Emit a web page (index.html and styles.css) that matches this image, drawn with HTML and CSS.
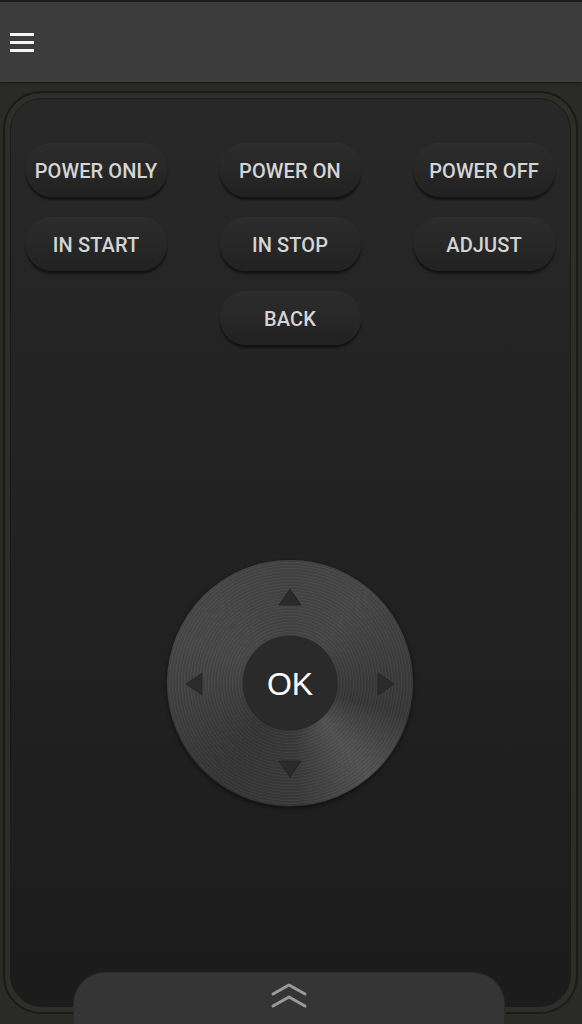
FILE: index.html
```html
<!DOCTYPE html>
<html lang="en">
<head>
    <meta charset="UTF-8">
    <meta name="viewport" content="width=device-width, initial-scale=1.0">
    <title>Remote</title>
    <link rel="stylesheet" href="styles.css">
</head>
<body>
    <div class="app-bar">
        <button class="menu-btn" aria-label="Menu">
            <span></span><span></span><span></span>
        </button>
    </div>

    <div class="main">
        <div class="frame">
            <div class="panel">
                <div class="key-grid">
                    <button class="key">POWER ONLY</button>
                    <button class="key">POWER ON</button>
                    <button class="key">POWER OFF</button>
                    <button class="key">IN START</button>
                    <button class="key">IN STOP</button>
                    <button class="key">ADJUST</button>
                    <button class="key key-back">BACK</button>
                </div>

                <div class="dpad">
                    <svg class="arrow arrow-up" width="24" height="18" viewBox="0 0 24 18"><polygon points="12,1 23,17 1,17"/></svg>
                    <svg class="arrow arrow-down" width="24" height="18" viewBox="0 0 24 18"><polygon points="1,1 23,1 12,17"/></svg>
                    <svg class="arrow arrow-left" width="18" height="24" viewBox="0 0 18 24"><polygon points="1,12 17,1 17,23"/></svg>
                    <svg class="arrow arrow-right" width="18" height="24" viewBox="0 0 18 24"><polygon points="17,12 1,1 1,23"/></svg>
                    <button class="ok-btn">OK</button>
                </div>
            </div>
        </div>

        <div class="drawer">
            <svg width="38" height="26" viewBox="0 0 38 26">
                <polyline points="3,11 19,2 35,11" />
                <polyline points="3,23 19,14 35,23" />
            </svg>
        </div>
    </div>
</body>
</html>
```

FILE: styles.css
```css
/* Reset */
html, body, button {
    margin: 0;
    padding: 0;
    font-family: Roboto, "Liberation Sans", Arial, sans-serif;
}

body {
    width: 582px;
    height: 1024px;
    overflow: hidden;
    background-color: #2a2a26;
}

/* Top bar */
.app-bar {
    height: 80px;
    border-top: 2px solid #1c1c1c;
    background-color: #3c3c3c;
    display: flex;
    align-items: center;
    padding-left: 10px;
    box-shadow: 0 1px 2px rgba(0, 0, 0, 0.5);
    position: relative;
    z-index: 1;
}

.menu-btn {
    background: none;
    border: none;
    width: 24px;
    display: flex;
    flex-direction: column;
    gap: 5px;
    margin-top: 1px;
}

.menu-btn span {
    display: block;
    width: 24px;
    height: 3px;
    background-color: #f4f4f4;
}

/* Main remote area */
.main {
    position: relative;
    height: 942px;
    padding: 9px 4px 0 3px;
}

.frame {
    height: 909px;
    border: 2px solid #1a1a17;
    border-radius: 38px;
    background-color: #2d2d29;
    padding: 5px;
}

.panel {
    height: 100%;
    box-sizing: border-box;
    border: 1px solid #1b1b19;
    border-radius: 32px;
    background: linear-gradient(#282828, #232323 40%, #1c1c1c);
    padding: 45px 15px 0 14px;
    display: flex;
    flex-direction: column;
    align-items: center;
}

/* Function keys */
.key-grid {
    display: grid;
    grid-template-columns: repeat(3, 141px);
    column-gap: 53px;
    row-gap: 21px;
}

.key {
    height: 53px;
    border: none;
    border-radius: 27px;
    background: linear-gradient(#2c2c2c, #262626 60%, #222222);
    color: #d4d4d4;
    font-size: 20px;
    font-weight: 500;
    letter-spacing: 0.1px;
    white-space: nowrap;
    box-shadow: 0 3px 2px #131313, 0 -1px 1px rgba(255, 255, 255, 0.05);
    cursor: pointer;
}

.key-back {
    grid-column: 2;
}

/* Direction pad */
.dpad {
    position: relative;
    width: 246px;
    height: 246px;
    margin-top: 215px;
    border-radius: 50%;
    background:
        repeating-radial-gradient(circle, rgba(255, 255, 255, 0.03) 0 1px, rgba(0, 0, 0, 0.05) 1px 2px, rgba(0, 0, 0, 0) 2px 3px),
        conic-gradient(#434343, #474747 40deg, #3b3b3b 85deg, #383838 105deg, #4c4c4c 130deg, #525252 140deg, #3a3a3a 175deg, #353535 215deg, #3d3d3d 250deg, #474747 290deg, #474747 320deg, #434343);
    box-shadow: 0 0 0 1px #1e1e1e, 0 2px 4px rgba(0, 0, 0, 0.6);
    display: flex;
    align-items: center;
    justify-content: center;
}

.ok-btn {
    width: 94px;
    height: 94px;
    border: none;
    border-radius: 50%;
    background-color: #2a2a2a;
    color: #ffffff;
    font-family: "Liberation Sans", Arial, sans-serif;
    font-size: 32px;
    padding-top: 3px;
    box-sizing: border-box;
    box-shadow: 0 0 2px rgba(0, 0, 0, 0.6);
}

.arrow {
    position: absolute;
}

.arrow polygon {
    fill: #2b2b2b;
    stroke: #262626;
    stroke-width: 1;
}

.arrow-up { top: 28px; left: 111px; }
.arrow-down { bottom: 28px; left: 111px; }
.arrow-left { left: 18px; top: 112px; }
.arrow-right { right: 18px; top: 112px; }

/* Bottom drawer handle */
.drawer {
    position: absolute;
    left: 73px;
    top: 890px;
    width: 432px;
    height: 70px;
    border: 1px solid #2a2a2a;
    border-radius: 32px 32px 0 0;
    background-color: #353535;
    display: flex;
    justify-content: center;
    padding-top: 10px;
    box-sizing: border-box;
}

.drawer polyline {
    fill: none;
    stroke: #9a9a9a;
    stroke-width: 3;
    stroke-linecap: round;
    stroke-linejoin: round;
}
```
